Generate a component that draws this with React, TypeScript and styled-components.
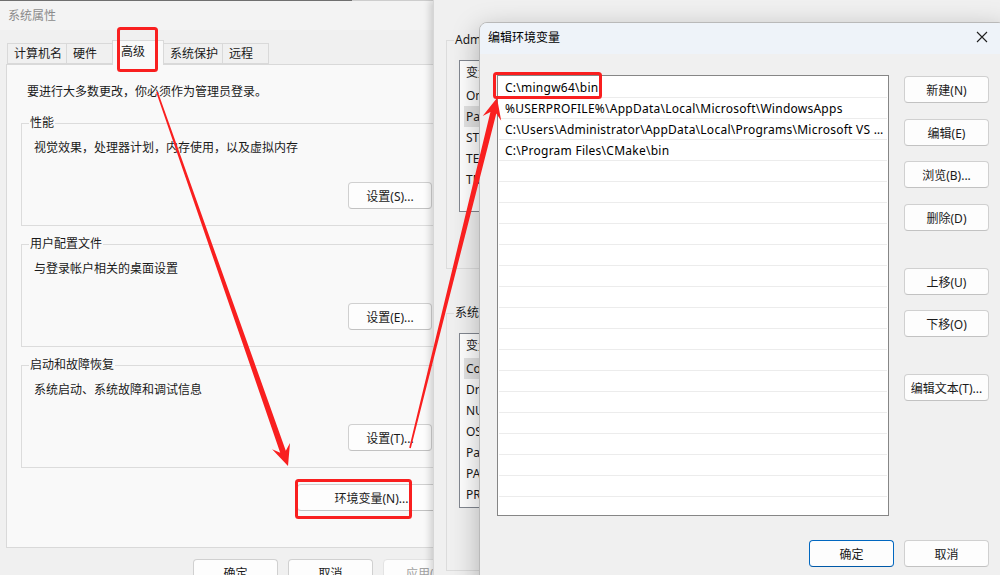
import React from 'react';
import styled, { createGlobalStyle } from 'styled-components';

const UI_FONT = `"Segoe UI", "Noto Sans", "Noto Sans CJK SC", sans-serif`;

const GlobalStyle = createGlobalStyle`
  html, body { margin: 0; padding: 0; width: 1000px; height: 575px; overflow: hidden; background: #f0f0f0; }
  #root { width: 1000px; height: 575px; }
  *, *::before, *::after { box-sizing: border-box; }
`;

const Desktop = styled.div`
  position: relative;
  width: 1000px;
  height: 575px;
  overflow: hidden;
  background: #f0f0f0;
  font-family: ${UI_FONT};
  font-size: 12px;
  color: #1a1a1a;
`;

/* ---------- shared parts ---------- */

const Button = styled.button<{ $w?: number; $primary?: boolean; $disabled?: boolean; $gapBefore?: number }>`
  width: ${p => p.$w ?? 85}px;
  height: 27px;
  flex-shrink: 0;
  margin-top: ${p => p.$gapBefore ?? 0}px;
  padding: 0;
  border-radius: 4px;
  border: 1px solid ${p => (p.$primary ? '#0067c0' : p.$disabled ? '#e3e3e3' : '#d0d0d0')};
  border-bottom-color: ${p => (p.$primary ? '#0059a8' : p.$disabled ? '#e3e3e3' : '#c2c2c2')};
  background: #fdfdfd;
  font-family: ${UI_FONT};
  font-size: 12px;
  color: ${p => (p.$disabled ? '#a2a2a2' : '#1a1a1a')};
  display: flex;
  align-items: center;
  justify-content: center;
  white-space: nowrap;
`;

const GroupBox = styled.fieldset<{ $top: number }>`
  margin: ${p => p.$top}px 0 0;
  padding: 0;
  border: 1px solid #dcdcdc;
  min-width: 0;
`;

const Legend = styled.legend`
  margin-left: 7px;
  padding: 0 1px;
  line-height: 16px;
  font-size: 12px;
  white-space: nowrap;
`;

const GroupInner = styled.div<{ $pad: string }>`
  padding: ${p => p.$pad};
  display: flex;
  flex-direction: column;
`;

/* ---------- 系统属性 window ---------- */

const SysWindow = styled.section`
  position: absolute;
  left: 0;
  top: 0;
  width: 478px;
  height: 600px;
  z-index: 1;
  background: #f0f0f0;
  display: flex;
  flex-direction: column;
`;

const SysTitleBar = styled.header`
  height: 30px;
  flex-shrink: 0;
  display: flex;
  align-items: center;
  padding-left: 8px;
  color: #8b8b8b;
  background: linear-gradient(to right, #6f6f6f 352px, #cdcdcd 352px) top / 100% 1px no-repeat, #f3f3f3;
`;

const SysBody = styled.div`
  padding: 10px 6px 0;
  display: flex;
  flex-direction: column;
`;

const TabStrip = styled.div`
  display: flex;
  align-items: flex-end;
  height: 24px;
  padding-left: 1px;
  position: relative;
  z-index: 1;
`;

const Tab = styled.div<{ $active?: boolean }>`
  min-width: ${p => (p.$active ? 52 : 47)}px;
  height: ${p => (p.$active ? 25 : 21)}px;
  margin-bottom: ${p => (p.$active ? -1 : 0)}px;
  padding: 0 4px 0 ${p => (p.$active ? 8 : 6)}px;
  border: 1px solid #d9d9d9;
  border-bottom: ${p => (p.$active ? 'none' : '1px solid #d9d9d9')};
  background: ${p => (p.$active ? '#f9f9f9' : '#f0f0f0')};
  line-height: ${p => (p.$active ? 22 : 19)}px;
  white-space: nowrap;
  position: relative;
  z-index: ${p => (p.$active ? 2 : 1)};
  & + & { margin-left: -1px; }
`;

const Panel = styled.div`
  height: 484px;
  border: 1px solid #d9d9d9;
  background: #f9f9f9;
  padding: 19px 25px 0 14px;
  display: flex;
  flex-direction: column;
`;

const Notice = styled.div`
  margin-left: 6px;
  line-height: 16px;
`;

const Desc = styled.div`
  margin-top: 9px;
  line-height: 16px;
`;

const RightRow = styled.div<{ $top: number }>`
  display: flex;
  justify-content: flex-end;
  margin-top: ${p => p.$top}px;
`;

const SysFooter = styled.div`
  display: flex;
  justify-content: flex-end;
  gap: 10px;
  margin-top: 11px;
  padding-right: 4px;
`;

/* ---------- 环境变量 window (behind) ---------- */

const EnvWindow = styled.section`
  position: absolute;
  left: 433px;
  top: 0;
  width: 600px;
  height: 600px;
  z-index: 2;
  background: #f0f0f0;
  box-shadow: -3px 0 7px rgba(0, 0, 0, 0.16);
  border-left: 1px solid #d6d6d6;
  padding: 32px 0 0 12px;
  display: flex;
  flex-direction: column;
`;

const VarList = styled.div<{ $h: number }>`
  margin-top: 12px;
  height: ${p => p.$h}px;
  border: 1px solid #828790;
  background: #fff;
  overflow: hidden;
`;

const VarHeader = styled.div`
  height: 24px;
  line-height: 24px;
  padding-left: 6px;
  white-space: nowrap;
`;

const VarRow = styled.div<{ $selected?: boolean }>`
  height: 21px;
  line-height: 22px;
  margin-left: 4px;
  padding-left: 2px;
  background: ${p => (p.$selected ? '#e3e3e3' : 'transparent')};
  white-space: nowrap;
`;

/* ---------- 编辑环境变量 dialog ---------- */

const Dialog = styled.section`
  position: absolute;
  left: 479px;
  top: 22px;
  width: 527px;
  height: 570px;
  z-index: 3;
  background: #f0f0f0;
  border: 1px solid #b9b9b9;
  border-radius: 8px 8px 0 0;
  overflow: hidden;
  box-shadow: 0 8px 28px rgba(0, 0, 0, 0.28);
  display: flex;
  flex-direction: column;
`;

const DialogTitleBar = styled.header`
  height: 31px;
  flex-shrink: 0;
  display: flex;
  align-items: center;
  justify-content: space-between;
  padding: 0 0 3px 8px;
  background: #eef3f9;
  color: #000;
`;

const CloseButton = styled.div`
  width: 46px;
  height: 28px;
  display: flex;
  align-items: center;
  justify-content: center;
`;

const DialogBody = styled.div`
  display: grid;
  grid-template-columns: 392px 85px;
  column-gap: 15px;
  row-gap: 24px;
  padding: 21px 0 0 17px;
`;

const PathList = styled.div`
  height: 441px;
  border: 1px solid #868686;
  background: #fff;
  padding: 1px;
  overflow: hidden;
`;

const PathRow = styled.div`
  height: 21px;
  border-bottom: 1px solid #ececec;
  padding: 2px 3px 0 6px;
  line-height: 18px;
  letter-spacing: 0.25px;
  white-space: nowrap;
  overflow: hidden;
  text-overflow: ellipsis;
  color: #000;
`;

const ButtonColumn = styled.div`
  display: flex;
  flex-direction: column;
`;

const DialogFooter = styled.div`
  grid-column: 1 / -1;
  display: flex;
  justify-content: flex-end;
  gap: 10px;
`;

/* ---------- annotations ---------- */

const Annotations = styled.svg`
  position: absolute;
  left: 0;
  top: 0;
  z-index: 10;
  pointer-events: none;
`;

const RED = '#f91f1f';

function arrowPoints(sx: number, sy: number, tx: number, ty: number): string {
  const w0 = 1.6, w1 = 6, headLen = 21, headHalf = 9.5;
  const dx = tx - sx, dy = ty - sy;
  const len = Math.hypot(dx, dy);
  const ux = dx / len, uy = dy / len;
  const nx = -uy, ny = ux;
  const neck = headLen * 0.72;
  const nX = tx - ux * neck, nY = ty - uy * neck;
  const bX = tx - ux * headLen, bY = ty - uy * headLen;
  const pts = [
    [sx + (nx * w0) / 2, sy + (ny * w0) / 2],
    [nX + (nx * w1) / 2, nY + (ny * w1) / 2],
    [bX + nx * headHalf, bY + ny * headHalf],
    [tx, ty],
    [bX - nx * headHalf, bY - ny * headHalf],
    [nX - (nx * w1) / 2, nY - (ny * w1) / 2],
    [sx - (nx * w0) / 2, sy - (ny * w0) / 2],
  ];
  return pts.map(p => p.map(v => v.toFixed(1)).join(',')).join(' ');
}

const CloseIcon = () => (
  <svg width="12" height="12" viewBox="0 0 12 12">
    <path d="M1 1 L11 11 M11 1 L1 11" stroke="#1f1f1f" strokeWidth="1.1" fill="none" />
  </svg>
);

const userVars = ['OneDrive', 'Path', 'STM32CubeMX_PATH', 'TEMP', 'TMP'];
const sysVars = ['ComSpec', 'DriverData', 'NUMBER_OF_PROCESSORS', 'OS', 'Path', 'PATHEXT', 'PROCESSOR_ARCHITECTURE'];
const paths = [
  'C:\\mingw64\\bin',
  '%USERPROFILE%\\AppData\\Local\\Microsoft\\WindowsApps',
  'C:\\Users\\Administrator\\AppData\\Local\\Programs\\Microsoft VS Code\\bin',
  'C:\\Program Files\\CMake\\bin',
];
const rows = Array.from({ length: 21 }, (_, i) => paths[i] ?? '');

const sideButtons: { label: string; gap: number }[] = [
  { label: '新建(N)', gap: 1 },
  { label: '编辑(E)', gap: 16 },
  { label: '浏览(B)...', gap: 15 },
  { label: '删除(D)', gap: 16 },
  { label: '上移(U)', gap: 37 },
  { label: '下移(O)', gap: 15 },
  { label: '编辑文本(T)...', gap: 37 },
];

const sysGroups = [
  { title: '性能', desc: '视觉效果，处理器计划，内存使用，以及虚拟内存', button: '设置(S)...' },
  { title: '用户配置文件', desc: '与登录帐户相关的桌面设置', button: '设置(E)...' },
  { title: '启动和故障恢复', desc: '系统启动、系统故障和调试信息', button: '设置(T)...' },
];

export default function App() {
  return (
    <>
      <GlobalStyle />
      <Desktop>
        <SysWindow>
          <SysTitleBar>系统属性</SysTitleBar>
          <SysBody>
            <TabStrip>
              <Tab>计算机名</Tab>
              <Tab>硬件</Tab>
              <Tab $active>高级</Tab>
              <Tab>系统保护</Tab>
              <Tab>远程</Tab>
            </TabStrip>
            <Panel>
              <Notice>要进行大多数更改，你必须作为管理员登录。</Notice>
              {sysGroups.map((g, i) => (
                <GroupBox key={g.title} $top={i === 0 ? 15 : 10}>
                  <Legend>{g.title}</Legend>
                  <GroupInner $pad="0 13px 16px 12px">
                    <Desc>{g.desc}</Desc>
                    <RightRow $top={26}>
                      <Button $w={84}>{g.button}</Button>
                    </RightRow>
                  </GroupInner>
                </GroupBox>
              ))}
              <RightRow $top={16}>
                <Button $w={149}>环境变量(N)...</Button>
              </RightRow>
            </Panel>
            <SysFooter>
              <Button>确定</Button>
              <Button>取消</Button>
              <Button $disabled>应用(A)</Button>
            </SysFooter>
          </SysBody>
        </SysWindow>

        <EnvWindow>
          <GroupBox $top={0}>
            <Legend>Administrator 的用户变量(U)</Legend>
            <GroupInner $pad="0 0 56px 12px">
              <VarList $h={152}>
                <VarHeader>变量</VarHeader>
                {userVars.map(v => (
                  <VarRow key={v} $selected={v === 'Path'}>{v}</VarRow>
                ))}
              </VarList>
            </GroupInner>
          </GroupBox>
          <GroupBox $top={36}>
            <Legend>系统变量(S)</Legend>
            <GroupInner $pad="0 0 62px 12px">
              <VarList $h={175}>
                <VarHeader>变量</VarHeader>
                {sysVars.map(v => (
                  <VarRow key={v} $selected={v === 'ComSpec'}>{v}</VarRow>
                ))}
              </VarList>
            </GroupInner>
          </GroupBox>
        </EnvWindow>

        <Dialog>
          <DialogTitleBar>
            <span>编辑环境变量</span>
            <CloseButton>
              <CloseIcon />
            </CloseButton>
          </DialogTitleBar>
          <DialogBody>
            <PathList>
              {rows.map((r, i) => (
                <PathRow key={i}>{r}</PathRow>
              ))}
            </PathList>
            <ButtonColumn>
              {sideButtons.map(b => (
                <Button key={b.label} $gapBefore={b.gap}>{b.label}</Button>
              ))}
            </ButtonColumn>
            <DialogFooter>
              <Button $primary>确定</Button>
              <Button>取消</Button>
            </DialogFooter>
          </DialogBody>
        </Dialog>

        <Annotations width="1000" height="575" viewBox="0 0 1000 575">
          <rect x="118.5" y="28.5" width="38" height="42" rx="2" fill="none" stroke={RED} strokeWidth="3" />
          <rect x="296.5" y="480.5" width="114" height="37" rx="2" fill="none" stroke={RED} strokeWidth="3" />
          <rect x="494.5" y="73.5" width="106" height="24" rx="2" fill="none" stroke={RED} strokeWidth="3" />
          <polygon points={arrowPoints(157, 92, 288, 466)} fill={RED} />
          <polygon points={arrowPoints(410, 448, 497, 98)} fill={RED} />
        </Annotations>
      </Desktop>
    </>
  );
}
